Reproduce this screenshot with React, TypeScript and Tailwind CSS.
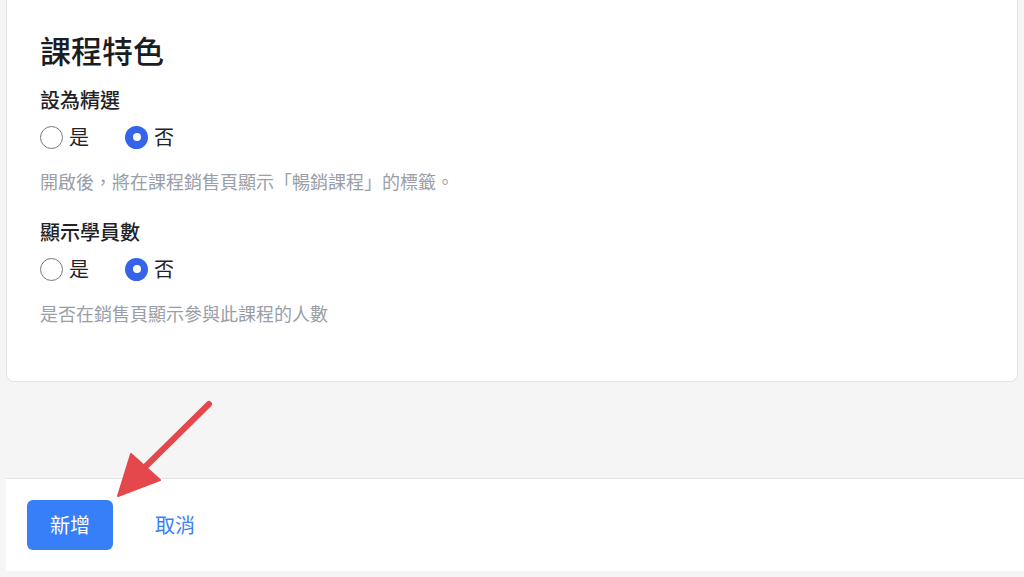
const font = { fontFamily: '"Noto Sans CJK TC", "Noto Sans", sans-serif' }

function Radio({ checked, label }: { checked: boolean; label: string }) {
  return (
    <label className="flex items-center gap-[6px] h-[28px]">
      {checked ? (
        <span className="w-[23px] h-[23px] rounded-full bg-[#3563e9] flex items-center justify-center">
          <span className="w-[8px] h-[8px] rounded-full bg-white" />
        </span>
      ) : (
        <span className="w-[23px] h-[23px] rounded-full border-[1.5px] border-[#737780] bg-white" />
      )}
      <span className="text-[20px] text-[#1f2328] leading-[28px]">{label}</span>
    </label>
  )
}

function Field({ title, hint }: { title: string; hint: string }) {
  return (
    <div>
      <div className="text-[20px] leading-[28px] text-[#1f2328] font-medium">{title}</div>
      <div className="flex items-center gap-[36px] mt-[9px]">
        <Radio checked={false} label="是" />
        <Radio checked label="否" />
      </div>
      <p className="mt-[17px] text-[18px] leading-[26px] text-[#9a9ea6]">{hint}</p>
    </div>
  )
}

export default function App() {
  return (
    <div style={font} className="relative w-[1024px] h-[577px] bg-[#f5f5f5] overflow-hidden">
      <section className="ml-[6px] mr-[6px] bg-white border-x border-b border-[#e3e3e3] rounded-b-[8px] pl-[33px] pt-[30px] pb-[55px]">
        <h2 className="text-[31px] leading-[40px] font-medium text-[#1a1d24]">課程特色</h2>
        <div className="mt-[16px]">
          <Field title="設為精選" hint="開啟後，將在課程銷售頁顯示「暢銷課程」的標籤。" />
        </div>
        <div className="mt-[24px]">
          <Field title="顯示學員數" hint="是否在銷售頁顯示參與此課程的人數" />
        </div>
      </section>

      <div className="mt-[96px] ml-[6px] h-[93px] bg-white border-t border-[#e3e3e3] pl-[21px] pt-[21px] flex items-start gap-[42px]">
        <button className="w-[86px] h-[50px] rounded-[6px] bg-[#377ef9] text-white text-[20px]">新增</button>
        <button className="h-[50px] text-[#3b7ff5] text-[20px]">取消</button>
      </div>

      {/* annotation arrow */}
      <svg className="absolute left-0 top-0 pointer-events-none" width="1024" height="577">
        <line x1="209" y1="404" x2="140" y2="472" stroke="#e4484c" strokeWidth="6" strokeLinecap="round" />
        <polygon points="118,496 131,454 160,480" fill="#e4484c" stroke="#e4484c" strokeWidth="2" strokeLinejoin="round" />
      </svg>
    </div>
  )
}
